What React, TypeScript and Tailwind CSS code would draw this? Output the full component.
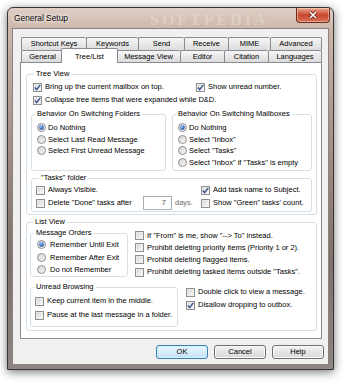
import type { ReactNode } from "react";

function CheckBox({ checked = false }: { checked?: boolean }) {
	return (
		<svg width="9" height="9" viewBox="0 0 9 9" className="shrink-0">
			<defs>
				<linearGradient id="cb-fill" x1="0" y1="0" x2="1" y2="1">
					<stop offset="0" stopColor="#d6d7d8" />
					<stop offset="1" stopColor="#f8f8f8" />
				</linearGradient>
			</defs>
			<rect x="0.5" y="0.5" width="8" height="8" fill="#f6f6f6" stroke="#8e8f8f" />
			<rect x="1.5" y="1.5" width="6" height="6" fill="url(#cb-fill)" />
			{checked && (
				<path d="M1.9 4.5 3.7 6.7 7.3 1.8" fill="none" stroke="#3b5290" strokeWidth="1.4" />
			)}
		</svg>
	);
}

function Radio({ checked = false }: { checked?: boolean }) {
	return (
		<svg width="9" height="9" viewBox="0 0 9 9" className="shrink-0">
			<defs>
				<linearGradient id="rb-fill" x1="0" y1="0" x2="1" y2="1">
					<stop offset="0" stopColor="#d2d3d4" />
					<stop offset="1" stopColor="#f8f8f8" />
				</linearGradient>
				<radialGradient id="rb-dot" cx="0.4" cy="0.35" r="0.7">
					<stop offset="0" stopColor="#b6dafb" />
					<stop offset="0.5" stopColor="#3a78cf" />
					<stop offset="1" stopColor="#163f86" />
				</radialGradient>
			</defs>
			<circle cx="4.5" cy="4.5" r="4" fill="url(#rb-fill)" stroke="#8e8f8f" />
			{checked && <circle cx="4.5" cy="4.5" r="2.3" fill="url(#rb-dot)" />}
		</svg>
	);
}

function CheckRow({ label, checked, className = "" }: { label: ReactNode; checked?: boolean; className?: string }) {
	return (
		<div className={`flex items-center gap-[3px] ${className}`}>
			<CheckBox checked={checked} />
			<span className="whitespace-nowrap">{label}</span>
		</div>
	);
}

function RadioRow({ label, checked, className = "" }: { label: ReactNode; checked?: boolean; className?: string }) {
	return (
		<div className={`flex items-center gap-[2px] ${className}`}>
			<Radio checked={checked} />
			<span className="whitespace-nowrap">{label}</span>
		</div>
	);
}

function Group({ title, className = "", children }: { title: ReactNode; className?: string; children?: ReactNode }) {
	return (
		<div className={`rounded-[3px] border border-[#d5dfe5] ${className}`}>
			<div className="-mt-[6px] flex h-[10px] items-center">
				<span className="ml-[3px] bg-white px-[2px] leading-[10px] whitespace-nowrap">{title}</span>
			</div>
			{children}
		</div>
	);
}

const tab =
	"flex items-center justify-center whitespace-nowrap rounded-t-[2px] border-l border-t border-[#898c95] bg-linear-to-b from-[#f6f6f6] to-[#dcdcdc]";

export default function App() {
	return (
		<div className="h-[386px] w-[350px] overflow-hidden bg-white pl-[7px] pt-[7px] font-['Liberation_Sans',Arial,sans-serif] text-[7.5px] text-black">
			<div className="flex h-[363px] w-[327px] flex-col rounded-t-[6px] border border-[#3b3433] bg-[linear-gradient(180deg,#e0cfc6_0px,#cdb6aa_21px,#a8948b_120px,#7e706b_250px,#8d8684_363px)] shadow-[0_2px_10px_rgba(0,0,0,0.55)]">
				{/* title bar */}
				<div className="relative flex h-[21px] items-center pl-[6px]">
					<span className="pointer-events-none absolute left-[142px] top-[0px] font-['Liberation_Serif',serif] text-[16px] font-bold tracking-[3px] text-[#e6d9d1]/60">
						SOFTPEDIA
					</span>
					<span className="relative text-[8.4px] [text-shadow:0_0_5px_#fff,0_0_3px_#fff]">General Setup</span>
					<div className="relative ml-auto mr-[3px] flex h-[15px] w-[34px] items-center justify-center self-start rounded-b-[4px] border border-t-0 border-[#6e2a1f] bg-linear-to-b from-[#eba792] via-[#c8452d] to-[#d8735a] shadow-[inset_0_0_0_1px_rgba(255,220,200,0.5)]">
						<svg width="10" height="8" viewBox="0 0 10 8">
							<path d="M2 1 8 7M8 1 2 7" stroke="#5a1a10" strokeWidth="3" />
							<path d="M2 1 8 7M8 1 2 7" stroke="#fff" strokeWidth="1.6" />
						</svg>
					</div>
				</div>

				{/* client */}
				<div className="mx-[5px] flex h-[335px] w-[315px] flex-col bg-[#f0f0f0] pt-[8px] ring-1 ring-[#8d817b]">
					<div className="ml-[8px] w-[301px]">
						<div className="flex h-[13px]">
							<div className={`${tab} w-[65px]`}>Shortcut Keys</div>
							<div className={`${tab} w-[52px]`}>Keywords</div>
							<div className={`${tab} w-[46px]`}>Send</div>
							<div className={`${tab} w-[44px]`}>Receive</div>
							<div className={`${tab} w-[42px]`}>MIME</div>
							<div className={`${tab} w-[52px] border-r`}>Advanced</div>
						</div>
						<div className="flex h-[12px] items-start">
							<div className={`${tab} h-[12px] w-[42px]`}>General</div>
							<div className="relative z-10 -mx-[2px] -mt-[2px] flex h-[15px] w-[57px] items-start justify-center rounded-t-[2px] border-x border-t border-[#898c95] bg-white pt-[2px]">
								Tree/List
							</div>
							<div className={`${tab} h-[12px] w-[64px]`}>Message View</div>
							<div className={`${tab} h-[12px] w-[44px]`}>Editor</div>
							<div className={`${tab} h-[12px] w-[44px]`}>Citation</div>
							<div className={`${tab} h-[12px] w-[54px] border-r`}>Languages</div>
						</div>
					</div>

					<div className="ml-[7px] h-[277px] w-[302px] border border-[#898c95] bg-white pl-[5px] pt-[11px]">
						<Group title="Tree View" className="w-[291px] px-[4px] pb-[2px]">
							<div className="mt-[2px] flex h-[12px] pl-[2px]">
								<CheckRow checked label="Bring up the current mailbox on top." className="w-[163px]" />
								<CheckRow checked label="Show unread number." />
							</div>
							<CheckRow checked label="Collapse tree items that were expanded while D&D." className="mt-[1px] h-[12px] pl-[2px]" />
							<div className="mt-[8px] flex gap-[6px]">
								<Group title="Behavior On Switching Folders" className="h-[57px] w-[135px]">
									<div className="pl-[5px] pt-[3px]">
										<RadioRow checked label="Do Nothing" className="h-[11.5px]" />
										<RadioRow label="Select Last Read Message" className="h-[11.5px]" />
										<RadioRow label="Select First Unread Message" className="h-[11.5px]" />
									</div>
								</Group>
								<Group title="Behavior On Switching Mailboxes" className="h-[57px] w-[140px]">
									<div className="pl-[5px] pt-[3px]">
										<RadioRow checked label="Do Nothing" className="h-[11.5px]" />
										<RadioRow label={'Select "Inbox"'} className="h-[11.5px]" />
										<RadioRow label={'Select "Tasks"'} className="h-[11.5px]" />
										<RadioRow label={'Select "Inbox" if "Tasks" is empty'} className="h-[11.5px]" />
									</div>
								</Group>
							</div>
							<Group title={'"Tasks" folder'} className="mt-[7px] pb-[1px] pl-[4px]">
								<div className="mt-[1px] flex h-[12px]">
									<CheckRow label="Always Visible." className="w-[165px]" />
									<CheckRow checked label="Add task name to Subject." />
								</div>
								<div className="flex h-[14px]">
									<div className="flex w-[165px] items-center">
										<CheckBox />
										<span className="ml-[3px] w-[95px] whitespace-nowrap">{'Delete "Done" tasks after'}</span>
										<div className="flex h-[14px] w-[29px] items-center justify-end border border-[#abadb3] bg-white pr-[5px] text-[#555]">
											7
										</div>
										<span className="ml-[3px] text-[#6d6d6d]">days.</span>
									</div>
									<CheckRow label={'Show "Green" tasks\' count.'} />
								</div>
							</Group>
						</Group>

						<Group title="List View" className="mt-[7px] w-[291px] pb-[3px] pl-[3px]">
							<div className="mt-[2px] flex h-[49px]">
								<Group title="Message Orders" className="mt-[4px] h-[44px] w-[98px]">
									<div className="pl-[6px] pt-[0.5px]">
										<RadioRow checked label="Remember Until Exit" className="h-[12.5px] gap-[4px]" />
										<RadioRow label="Remember After Exit" className="h-[12.5px] gap-[4px]" />
										<RadioRow label="Do not Remember" className="h-[12.5px] gap-[4px]" />
									</div>
								</Group>
								<div className="ml-[7px]">
									<CheckRow label={'If "From" is me, show "--> To" instead.'} className="h-[12.3px]" />
									<CheckRow label="Prohibit deleting priority items (Priority 1 or 2)." className="h-[12.3px]" />
									<CheckRow label="Prohibit deleting flagged items." className="h-[12.3px]" />
									<CheckRow label={'Prohibit deleting tasked items outside "Tasks".'} className="h-[12.3px]" />
								</div>
							</div>
							<div className="flex">
								<Group title="Unread Browsing" className="mt-[9px] h-[40px] w-[148px]">
									<div className="pl-[4px] pt-[2.5px]">
										<CheckRow label="Keep current item in the middle." className="h-[13px]" />
										<CheckRow label="Pause at the last message in a folder." className="mt-[1px] h-[13px]" />
									</div>
								</Group>
								<div className="ml-[8px] mt-[7.5px]">
									<CheckRow label="Double click to view a message." className="h-[13px]" />
									<CheckRow checked label="Disallow dropping to outbox." className="h-[13px]" />
								</div>
							</div>
						</Group>
					</div>

					<div className="mt-[6px] flex justify-end gap-[6px] pr-[4px]">
						<button className="h-[14px] w-[52px] rounded-[3px] border border-[#3c7fb1] bg-linear-to-b from-[#eaf6fd] to-[#c2e2f6] shadow-[inset_0_0_0_1px_#d3f0fd]">
							OK
						</button>
						<button className="h-[14px] w-[52px] rounded-[3px] border border-[#707070] bg-linear-to-b from-[#f3f3f3] to-[#d8d8d8] shadow-[inset_0_0_0_1px_#fbfbfb]">
							Cancel
						</button>
						<button className="h-[14px] w-[52px] rounded-[3px] border border-[#707070] bg-linear-to-b from-[#f3f3f3] to-[#d8d8d8] shadow-[inset_0_0_0_1px_#fbfbfb]">
							Help
						</button>
					</div>
				</div>
			</div>
		</div>
	);
}
